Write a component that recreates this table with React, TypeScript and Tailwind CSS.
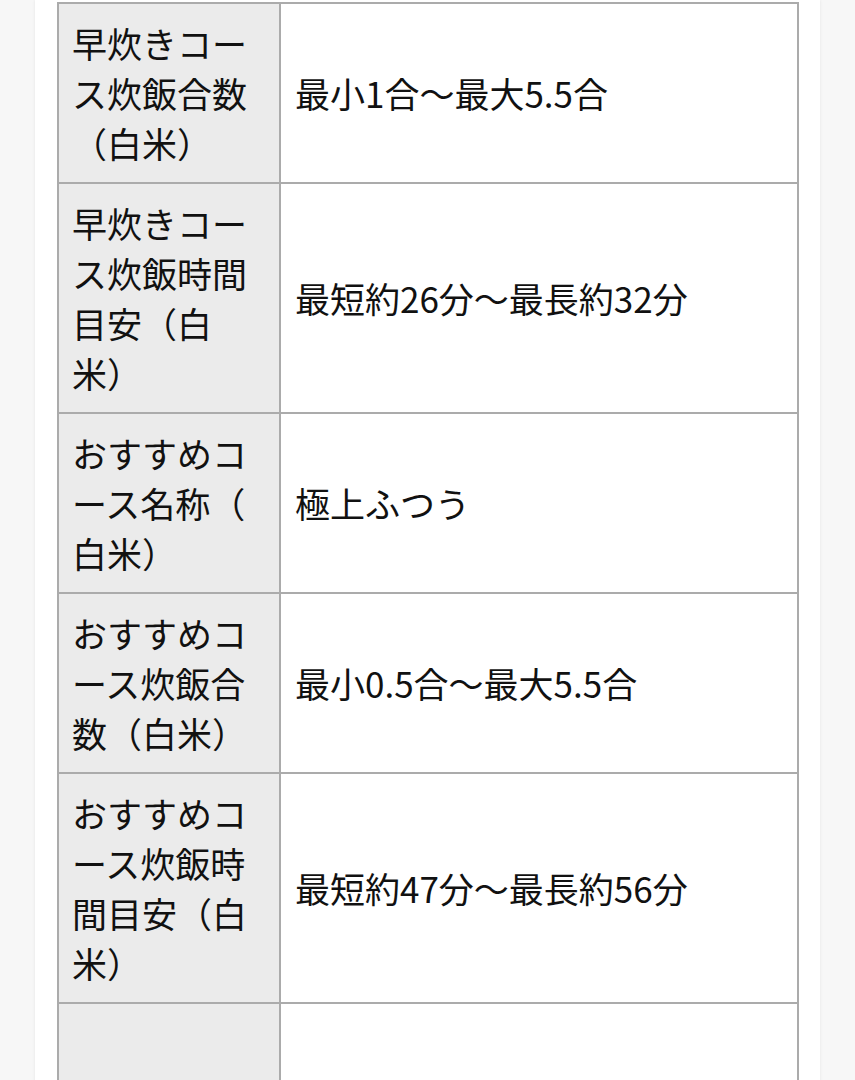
const rows: { label: string[]; value: string }[] = [
  { label: ['早炊きコー', 'ス炊飯合数', '（白米）'], value: '最小1合～最大5.5合' },
  { label: ['早炊きコー', 'ス炊飯時間', '目安（白', '米）'], value: '最短約26分～最長約32分' },
  { label: ['おすすめコ', 'ース名称（', '白米）'], value: '極上ふつう' },
  { label: ['おすすめコ', 'ース炊飯合', '数（白米）'], value: '最小0.5合～最大5.5合' },
  { label: ['おすすめコ', 'ース炊飯時', '間目安（白', '米）'], value: '最短約47分～最長約56分' },
  { label: ['', '', ''], value: '' },
]

export default function App() {
  return (
    <div
      className="min-h-screen bg-[#f7f7f7] text-[#111111]"
      style={{ fontFamily: '"Noto Sans CJK JP", "Noto Sans", sans-serif' }}
    >
      <div className="ml-[35px] w-[785px] min-h-screen bg-white pl-[22px] pr-[21px] pt-[2px] shadow-[0_0_3px_rgba(0,0,0,0.08)]">
        {/* Spec table */}
        <table className="w-[742px] border-collapse text-[35px] leading-[50px]">
          <tbody>
            {rows.map((row, i) => (
              <tr key={i}>
                <th className="w-[222px] border-2 border-[#ababab] bg-[#ebebeb] px-[13px] py-[14px] text-left align-top font-normal">
                  {row.label.map((line, j) => (
                    <div key={j} className="h-[50px] whitespace-nowrap">
                      {line}
                    </div>
                  ))}
                </th>
                <td className="border-2 border-[#ababab] bg-white px-[14px] py-[14px] align-middle whitespace-nowrap">
                  {row.value}
                </td>
              </tr>
            ))}
          </tbody>
        </table>
      </div>
    </div>
  )
}
